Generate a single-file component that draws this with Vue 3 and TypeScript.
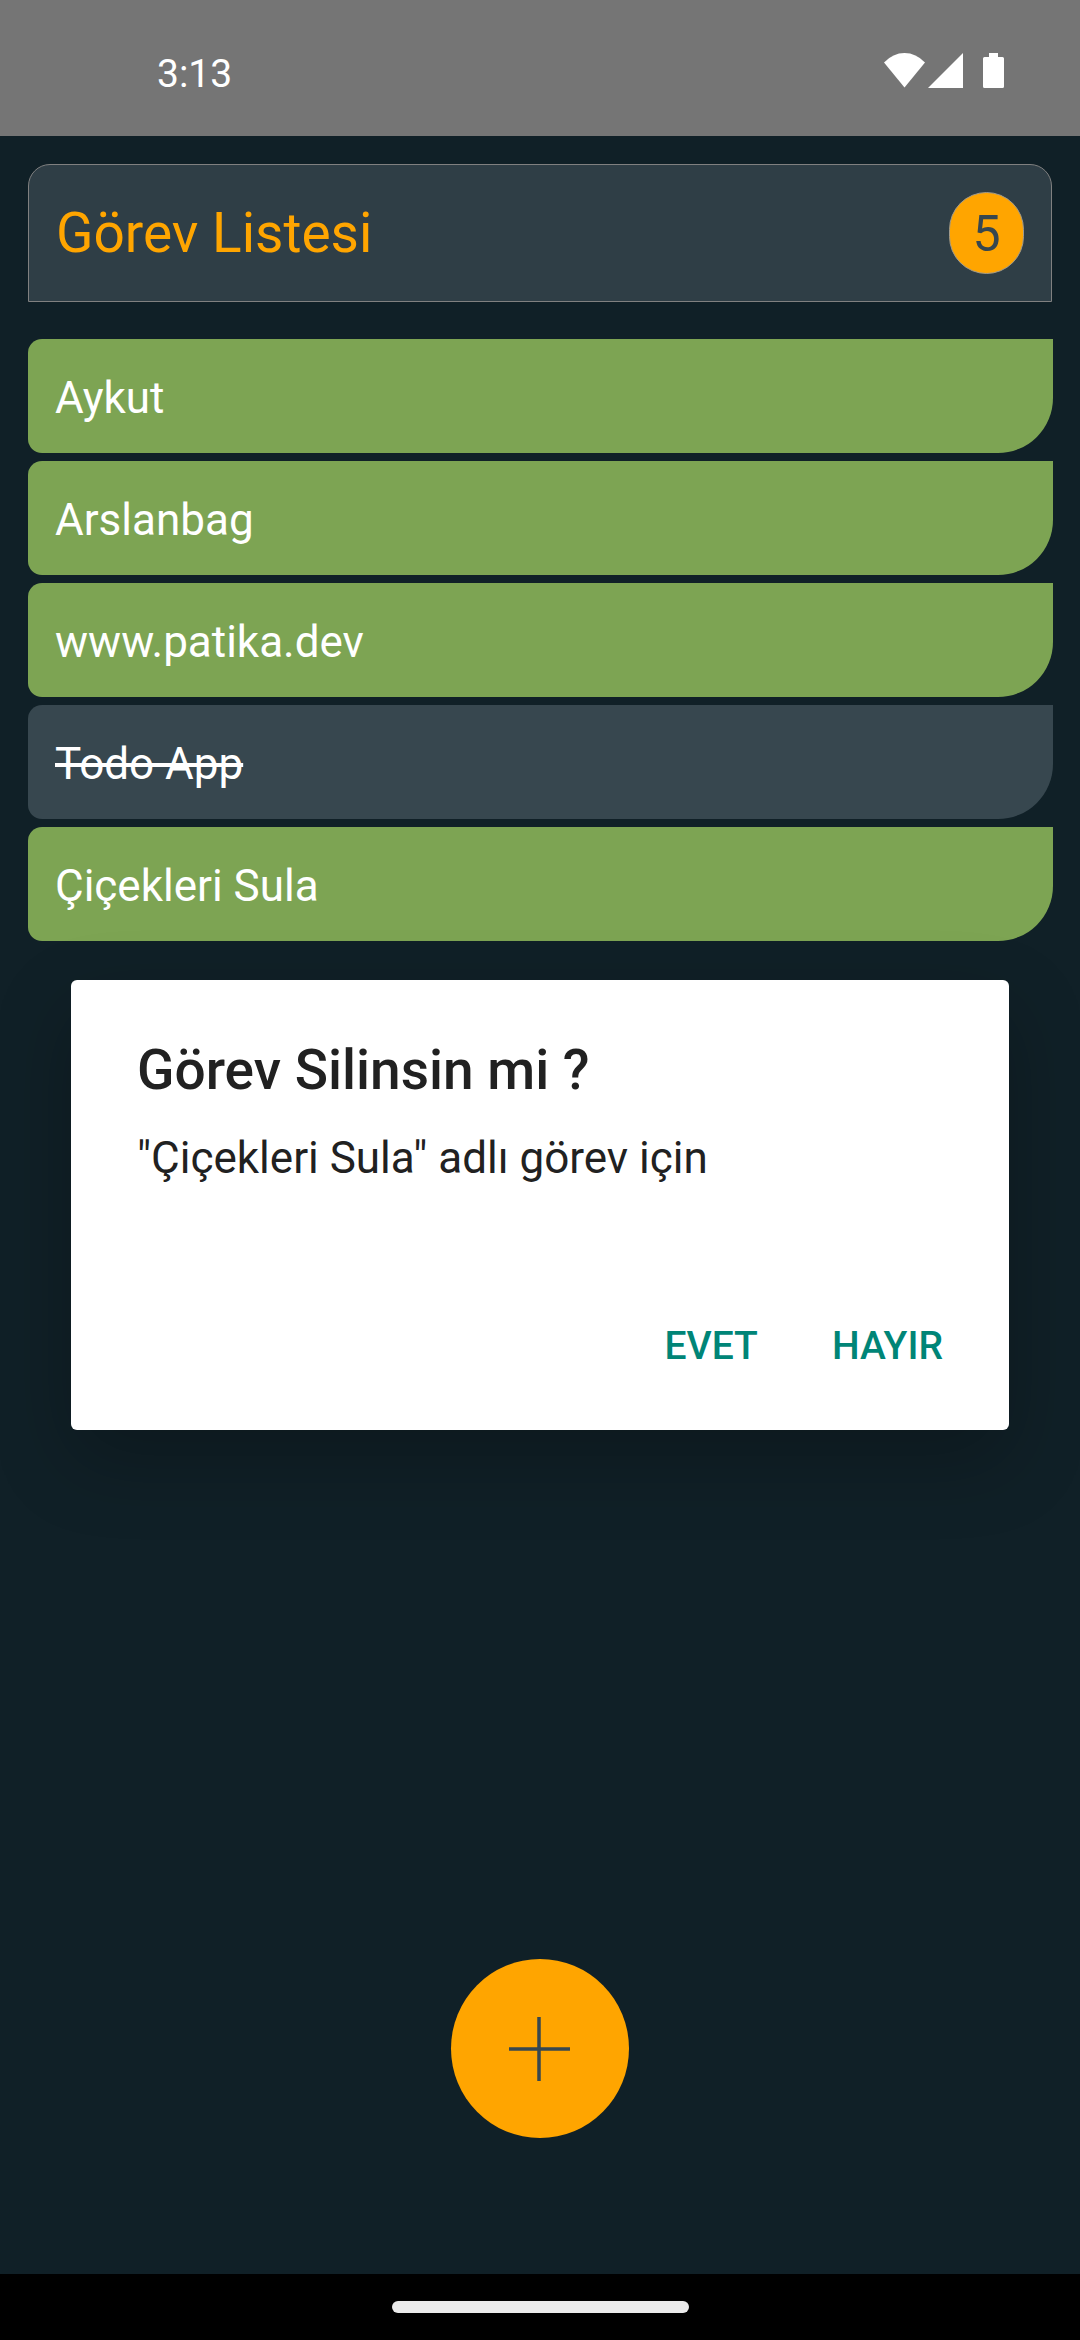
<script setup lang="ts">
import { computed, ref } from 'vue'

interface Task {
  id: number
  title: string
  done: boolean
}

const tasks = ref<Task[]>([
  { id: 1, title: 'Aykut', done: false },
  { id: 2, title: 'Arslanbag', done: false },
  { id: 3, title: 'www.patika.dev', done: false },
  { id: 4, title: 'Todo App', done: true },
  { id: 5, title: 'Çiçekleri Sula', done: false },
])

const pending = ref<Task | null>(tasks.value[4])
const count = computed(() => tasks.value.length)

function toggle(task: Task) {
  task.done = !task.done
}

function confirmDelete() {
  tasks.value = tasks.value.filter((t) => t.id !== pending.value?.id)
  pending.value = null
}
</script>

<template>
  <div class="screen">
    <div class="status-bar">
      <time class="clock">3:13</time>
      <svg class="status-icons" width="120" height="36" viewBox="0 0 120 36" fill="#fff" aria-hidden="true">
        <path d="M0 9.5Q9 0 20.5 0T41 9.5L20.5 34.5Z" />
        <path d="M44 35L79 0V35Z" />
        <path d="M105 0h9v4h4.500q1.500 0 1.500 1.500v28q0 1.500-1.500 1.500h-18q-1.500 0-1.500-1.500v-28q0-1.500 1.500-1.500h4.500z" />
      </svg>
    </div>

    <main class="app">
      <header class="header">
        <h1 class="heading">Görev Listesi</h1>
        <span class="badge">{{ count }}</span>
      </header>

      <ul class="list">
        <li v-for="task in tasks" :key="task.id">
          <button
            type="button"
            class="task"
            :class="{ done: task.done }"
            @click="toggle(task)"
            @contextmenu.prevent="pending = task"
          >{{ task.title }}</button>
        </li>
      </ul>

      <button type="button" class="add" aria-label="Görev ekle">
        <svg width="62" height="66" viewBox="0 0 62 66" fill="none" stroke="#37474f" stroke-width="3.500" aria-hidden="true">
          <path d="M0 33H61M30 1V65" />
        </svg>
      </button>

      <div v-if="pending" class="overlay">
        <section class="dialog" role="alertdialog" aria-labelledby="dialog-title" aria-describedby="dialog-text">
          <h2 id="dialog-title" class="dialog-title">Görev Silinsin mi ?</h2>
          <p id="dialog-text" class="dialog-text">"{{ pending.title }}" adlı görev için</p>
          <div class="actions">
            <button type="button" class="action" @click="confirmDelete">EVET</button>
            <button type="button" class="action" @click="pending = null">HAYIR</button>
          </div>
        </section>
      </div>
    </main>

    <div class="nav-bar"><span class="handle"></span></div>
  </div>
</template>

<style>
body {
  margin: 0;
  background: #102027;
}
</style>

<style scoped>
.screen {
  display: flex;
  flex-direction: column;
  min-height: 100vh;
  background: #102027;
  font-family: Roboto, "Liberation Sans", sans-serif;
}

button {
  border: 0;
  font-family: inherit;
  cursor: pointer;
}

.status-bar {
  display: flex;
  align-items: center;
  justify-content: space-between;
  box-sizing: border-box;
  height: 136px;
  padding: 6px 76px 0 157px;
  background: #757575;
  color: #fff;
}

.clock {
  padding-top: 6px;
  font-size: 39px;
  line-height: 48px;
}

.app {
  position: relative;
  display: flex;
  flex: 1;
  flex-direction: column;
}

.header {
  display: flex;
  align-items: center;
  justify-content: space-between;
  margin: 28px 28px 37px;
  padding: 27px;
  border: 1px solid #808080;
  border-radius: 22px 22px 0 0;
  background: #2f3e46;
}

.heading {
  margin: 0;
  color: #ffa500;
  font-size: 55px;
  font-weight: 400;
  line-height: 64px;
}

.badge {
  box-sizing: border-box;
  min-width: 75px;
  padding: 12px 22px 10px;
  border: 1px solid #a09a8c;
  border-radius: 38px;
  background: #ffa500;
  color: #37474f;
  font-size: 50px;
  line-height: 58px;
  text-align: center;
}

.list {
  display: flex;
  flex-direction: column;
  gap: 8px;
  margin: 0 27px 0 28px;
  padding: 0;
  list-style: none;
}

.task {
  display: block;
  width: 100%;
  padding: 29px 27px 25px;
  border-radius: 14px 0 55px 14px;
  background: #7da453;
  color: #fff;
  font-size: 44px;
  line-height: 60px;
  text-align: left;
}

.task.done {
  background: #37474f;
  text-decoration: line-through;
}

.add {
  display: flex;
  align-items: center;
  justify-content: center;
  align-self: center;
  width: 178px;
  height: 179px;
  margin: auto 0 136px;
  padding: 0;
  border-radius: 50%;
  background: #ffa500;
}

.overlay {
  position: absolute;
  inset: 0;
  display: flex;
  align-items: center;
  padding: 0 71px;
}

.dialog {
  box-sizing: border-box;
  width: 100%;
  padding: 56px 66px 54px;
  border-radius: 6px;
  background: #fff;
  box-shadow: 0 30px 80px rgba(0, 0, 0, 0.24);
  color: #212121;
}

.dialog-title {
  margin: 0 0 24px;
  font-size: 55px;
  font-weight: 500;
  line-height: 68px;
}

.dialog-text {
  margin: 0;
  font-size: 44px;
  line-height: 60px;
}

.actions {
  display: flex;
  justify-content: flex-end;
  gap: 74px;
  margin-top: 128px;
}

.action {
  padding: 0;
  background: none;
  color: #008577;
  font-size: 39px;
  font-weight: 500;
  line-height: 60px;
}

.nav-bar {
  display: flex;
  align-items: center;
  justify-content: center;
  height: 66px;
  background: #000;
}

.handle {
  width: 297px;
  height: 12px;
  border-radius: 6px;
  background: #ebebeb;
}
</style>
